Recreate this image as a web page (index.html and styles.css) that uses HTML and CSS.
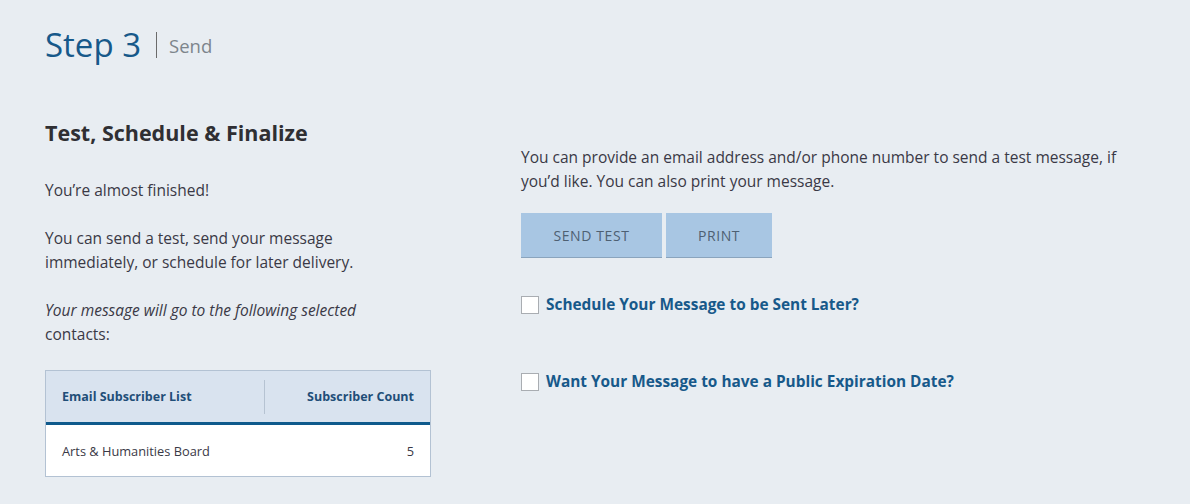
FILE: index.html
```html
<!DOCTYPE html>
<html lang="en">
<head>
<meta charset="utf-8">
<title>Step 3 - Send</title>
<link rel="stylesheet" href="styles.css">
</head>
<body>
<div class="page">
  <header class="step-head">
    <h1 class="step-title">Step 3</h1>
    <span class="step-sep"></span>
    <span class="step-sub">Send</span>
  </header>
  <div class="cols">
    <section class="col-left">
      <h2 class="section-title">Test, Schedule &amp; Finalize</h2>
      <p class="txt txt-left">You’re almost finished!</p>
      <p class="txt txt-left">You can send a test, send your message immediately, or schedule for later delivery.</p>
      <p class="txt txt-left"><em>Your message will go to the following selected</em> contacts:</p>
      <div class="tbl">
        <div class="tbl-head">
          <div class="th th-name">Email Subscriber List</div>
          <div class="th-sep"></div>
          <div class="th th-count">Subscriber Count</div>
        </div>
        <div class="tbl-row">
          <div class="td">Arts &amp; Humanities Board</div>
          <div class="td td-count">5</div>
        </div>
      </div>
    </section>
    <section class="col-right">
      <p class="txt txt-right">You can provide an email address and/or phone number to send a test message, if you’d like. You can also print your message.</p>
      <div class="btns">
        <button class="btn btn-test">SEND TEST</button>
        <button class="btn btn-print">PRINT</button>
      </div>
      <label class="check check-first"><span class="box"></span><span class="check-label">Schedule Your Message to be Sent Later?</span></label>
      <label class="check check-second"><span class="box"></span><span class="check-label">Want Your Message to have a Public Expiration Date?</span></label>
    </section>
  </div>
</div>
</body>
</html>
```
FILE: styles.css
```css
html, body {
  margin: 0;
  padding: 0;
  background: #e8edf2;
}
body {
  font-family: "Open Sans", "Noto Sans", sans-serif;
  color: #3a3946;
}
.page {
  padding: 22px 0 0 45px;
}
.step-head {
  display: flex;
  align-items: center;
  height: 46px;
}
.step-title {
  margin: 0;
  font-size: 33px;
  font-weight: 400;
  color: #17598a;
  line-height: 46px;
}
.step-sep {
  width: 1px;
  height: 26px;
  background: #6b6b6b;
  margin: 0 12px 0 15px;
}
.step-sub {
  font-size: 18.5px;
  color: #7d858c;
}
.cols {
  display: flex;
  gap: 90px;
  margin-top: 50px;
}
.col-left {
  width: 386px;
  flex: none;
}
.col-right {
  width: 620px;
  flex: none;
  padding-top: 27px;
}
.section-title {
  margin: 0 0 30px;
  font-size: 21.5px;
  font-weight: 700;
  color: #2f2f33;
  line-height: 30px;
}
.txt {
  margin: 0 0 24px;
  font-size: 15.5px;
  line-height: 24px;
}
.txt-left {
  max-width: 370px;
}
.txt-right {
  margin-bottom: 20px;
}
.txt em {
  font-style: italic;
}
.tbl {
  border: 1px solid #b3c2d3;
  background: #fff;
}
.tbl-head {
  display: flex;
  align-items: center;
  height: 51px;
  background: #d9e3ef;
  border-bottom: 3px solid #0f5a8c;
}
.th {
  font-size: 12.5px;
  font-weight: 700;
  color: #1f4e78;
  padding: 0 16px;
}
.th-name {
  width: 186px;
}
.th-sep {
  width: 1px;
  height: 34px;
  background: #b6c3d2;
}
.th-count {
  flex: 1;
  text-align: right;
}
.tbl-row {
  display: flex;
  align-items: center;
  height: 51px;
}
.td {
  font-size: 12.8px;
  color: #3a3946;
  padding: 0 16px;
  flex: 1;
}
.td-count {
  text-align: right;
}
.btns {
  display: flex;
  gap: 4px;
}
.btn {
  font-family: inherit;
  height: 45px;
  border: 0;
  border-bottom: 1px solid #8aa4bd;
  background: #a8c6e3;
  color: #4e6072;
  font-size: 14px;
  letter-spacing: 0.6px;
  padding: 0;
}
.btn-test { width: 141px; }
.btn-print { width: 106px; }
.check {
  display: flex;
  align-items: center;
  gap: 7px;
}
.check-first {
  margin-top: 36px;
}
.check-second {
  margin-top: 56px;
}
.box {
  width: 16px;
  height: 16px;
  background: #fff;
  border: 1px solid #a9adb2;
  flex: none;
}
.check-label {
  font-size: 15.4px;
  font-weight: 700;
  color: #17598a;
}
```
